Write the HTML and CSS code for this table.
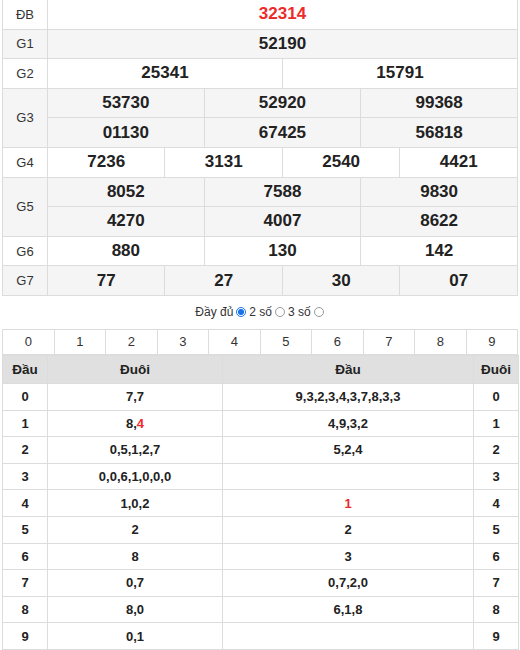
FILE: index.html
```html
<!DOCTYPE html>
<html lang="vi">
<head>
<meta charset="utf-8">
<link rel="stylesheet" href="styles.css">
</head>
<body>
<div class="wrap">
<table class="kq">
<colgroup><col class="c-lbl"><col span="12"></colgroup>
<tr class="w"><td class="lbl">ĐB</td><td colspan="12" class="num red">32314</td></tr>
<tr class="g"><td class="lbl">G1</td><td colspan="12" class="num">52190</td></tr>
<tr class="w"><td class="lbl">G2</td><td colspan="6" class="num">25341</td><td colspan="6" class="num">15791</td></tr>
<tr class="g"><td class="lbl" rowspan="2">G3</td><td colspan="4" class="num">53730</td><td colspan="4" class="num">52920</td><td colspan="4" class="num">99368</td></tr>
<tr class="g"><td colspan="4" class="num">01130</td><td colspan="4" class="num">67425</td><td colspan="4" class="num">56818</td></tr>
<tr class="w"><td class="lbl">G4</td><td colspan="3" class="num">7236</td><td colspan="3" class="num">3131</td><td colspan="3" class="num">2540</td><td colspan="3" class="num">4421</td></tr>
<tr class="g"><td class="lbl" rowspan="2">G5</td><td colspan="4" class="num">8052</td><td colspan="4" class="num">7588</td><td colspan="4" class="num">9830</td></tr>
<tr class="g"><td colspan="4" class="num">4270</td><td colspan="4" class="num">4007</td><td colspan="4" class="num">8622</td></tr>
<tr class="w"><td class="lbl">G6</td><td colspan="4" class="num">880</td><td colspan="4" class="num">130</td><td colspan="4" class="num">142</td></tr>
<tr class="g"><td class="lbl">G7</td><td colspan="3" class="num">77</td><td colspan="3" class="num">27</td><td colspan="3" class="num">30</td><td colspan="3" class="num">07</td></tr>
</table>

<div class="opts">
<span>Đầy đủ</span><span class="radio on"></span><span>2 số</span><span class="radio"></span><span>3 số</span><span class="radio"></span>
</div>

<table class="digits">
<tr><td>0</td><td>1</td><td>2</td><td>3</td><td>4</td><td>5</td><td>6</td><td>7</td><td>8</td><td>9</td></tr>
</table>

<table class="loto">
<colgroup><col class="l1"><col class="l2"><col class="l3"><col class="l4"></colgroup>
<tr class="hd"><th>Đầu</th><th>Đuôi</th><th>Đầu</th><th>Đuôi</th></tr>
<tr><td>0</td><td>7,7</td><td>9,3,2,3,4,3,7,8,3,3</td><td>0</td></tr>
<tr><td>1</td><td>8,<span class="red">4</span></td><td>4,9,3,2</td><td>1</td></tr>
<tr><td>2</td><td>0,5,1,2,7</td><td>5,2,4</td><td>2</td></tr>
<tr><td>3</td><td>0,0,6,1,0,0,0</td><td></td><td>3</td></tr>
<tr><td>4</td><td>1,0,2</td><td><span class="red">1</span></td><td>4</td></tr>
<tr><td>5</td><td>2</td><td>2</td><td>5</td></tr>
<tr><td>6</td><td>8</td><td>3</td><td>6</td></tr>
<tr><td>7</td><td>0,7</td><td>0,7,2,0</td><td>7</td></tr>
<tr><td>8</td><td>8,0</td><td>6,1,8</td><td>8</td></tr>
<tr><td>9</td><td>0,1</td><td></td><td>9</td></tr>
</table>
</div>
</body>
</html>
```

FILE: styles.css
```css
html, body {
  margin: 0;
  padding: 0;
  background: #fff;
}
body {
  font-family: "Liberation Sans", Arial, sans-serif;
  color: #222;
}
.wrap {
  width: 516px;
  margin-left: 2px;
  margin-top: -1px;
}
table {
  border-collapse: collapse;
  width: 516px;
  table-layout: fixed;
}
td, th {
  border: 1px solid #dcdcdc;
  padding: 0;
  text-align: center;
}
.kq .c-lbl { width: 45px; }
.kq tr { height: 29.6px; }
.kq tr.g td { background: #f5f5f5; }
.kq tr.w td { background: #fff; }
.kq .lbl {
  font-size: 13px;
  color: #333;
}
.kq .num {
  font-size: 17px;
  font-weight: bold;
  color: #222;
}
.red { color: #ee2a2a !important; }

.opts {
  height: 33px;
  display: flex;
  align-items: center;
  justify-content: center;
  gap: 2px;
  font-size: 12px;
  color: #333;
}
.radio {
  width: 10px;
  height: 10px;
  border: 1px solid #999;
  border-radius: 50%;
  box-sizing: border-box;
  display: inline-block;
  background: #fff;
  margin: 0 1px;
}
.radio.on {
  border: 1px solid #1a73e8;
  background: radial-gradient(circle, #1a73e8 0 2.8px, #fff 3.2px);
}

.digits tr { height: 25px; }
.digits td {
  font-size: 13px;
  color: #333;
  background: #fff;
}

.loto .l1 { width: 45px; }
.loto .l2 { width: 175px; }
.loto .l3 { width: 251px; }
.loto .l4 { width: 45px; }
.loto tr.hd { height: 28px; }
.loto th {
  background: #e0e0e0;
  font-size: 13.5px;
  font-weight: bold;
  color: #222;
}
.loto tr { height: 26.6px; }
.loto td {
  font-size: 13px;
  font-weight: bold;
  color: #222;
  background: #fff;
}
```
